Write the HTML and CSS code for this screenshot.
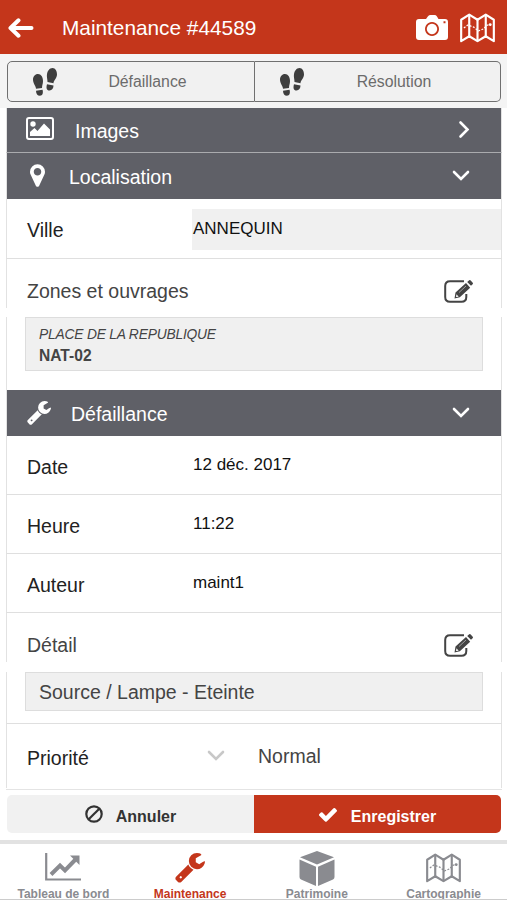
FILE: index.html
```html
<!DOCTYPE html>
<html lang="fr">

<head>
  <meta charset="utf-8">
  <title>Maintenance #44589</title>
  <link rel="stylesheet" href="styles.css">
</head>

<body>

  <!-- Shared icons -->
  <svg class="sprite">
    <symbol id="steps" viewBox="0 0 26 28">
      <path d="M6 6C9 6 11 9 11 13c0 3-1 4-1 7l-6 .8c0-3-3-5-3-9.300C1 8.500 3 6 6 6zM4 22.800l6.500-1c1 3 0 6-2.500 6s-4-2-4-5z" />
      <path d="M20.500 0c-3 0-5 3-5.500 6-.5 3 .5 5 .5 8l6 1.300c0-3 3.500-5 3.500-8.800C25 3 23.500 0 20.500 0zM15 16.200l6.500 1.400c0 3-1.500 4.900-4 4.900-3 0-3.500-3-2.500-6.300z" />
    </symbol>
    <symbol id="wrench" viewBox="64 128 1664 1664">
      <path d="M448 1472q0-26-19-45t-45-19-45 19-19 45 19 45 45 19 45-19 19-45zm644-420l-682 682q-37 37-90 37-52 0-91-37l-106-108q-38-36-38-90 0-53 38-91l681-681q39 98 114.500 173.500t173.500 114.500zm634-435q0 39-23 106-47 134-164.500 217.500t-258.500 83.500q-185 0-316.500-131.500t-131.500-316.500 131.500-316.500 316.500-131.500q58 0 121.500 16.500t107.500 46.500q16 11 16 28t-16 28l-293 169v224l193 107q5-3 79-48.500t135.500-81 70.500-35.500q15 0 23.500 10t8.500 25z" />
    </symbol>
    <symbol id="map" viewBox="0 0 36 30">
      <g fill="none" stroke="currentColor" stroke-width="2.200" stroke-linejoin="round">
        <path d="M1.200 6.500L9.500 1.200 18 6.500l8.500-5.300 8.300 5.300v22l-8.300-5-8.500 5-8.500-5-8.300 5z" />
        <path d="M9.500 1.200v22.300M18 6.500v22M26.500 1.200v22.300" />
        <path d="M4 15l4-3 6 2 5 4 5-2 4-4h4" stroke-width="1.300" stroke-dasharray="2 1.500" />
      </g>
      <circle cx="31" cy="11.500" r="1.500" />
    </symbol>
    <symbol id="edit" viewBox="0 0 29 23">
      <path d="M20 1.200H6Q1.200 1.200 1.200 6v11q0 4.800 4.800 4.800h11.500q4.800 0 4.800-4.800v-3" fill="none" stroke="currentColor" stroke-width="2" />
      <path d="M10.500 18.500l1-6L22 3l4.200 4.700-10.400 9.500zM23.200 2l2-1.700q.8-.6 1.500.1l2 2.400q.6.800-.1 1.500l-1.600 1.500z" />
      <path d="M12.500 14.200l2.200 2.500-2.700.3z" fill="#fff" />
      <path d="M15 12.500l7-6.500" fill="none" stroke="#aaa" stroke-width=".9" />
    </symbol>
    <symbol id="chevron" viewBox="0 0 18 11">
      <path d="M2 2l7 7 7-7" fill="none" stroke="currentColor" stroke-width="2.600" stroke-linecap="round" />
    </symbol>
  </svg>

  <header class="topbar">
    <svg class="back" viewBox="0 0 26 20">
      <path d="M10.500 2.300L2.500 10l8 7.700M3 10h20.500" fill="none" stroke="currentColor" stroke-width="4" stroke-linecap="round" stroke-linejoin="round" />
    </svg>
    <h1>Maintenance #44589</h1>
    <svg class="camera" viewBox="0 0 32 26">
      <path fill-rule="evenodd" d="M3 4h7l2-2.800Q13 0 14.500 0h4q1.500 0 2.300 1.200L22.500 4H29q3 0 3 3v15q0 3-3 3H3q-3 0-3-3V7q0-3 3-3zm13 3a7 7 0 1 0 .01 0zm0 1.800a5.200 5.200 0 1 1-.01 0zM27.500 6.200v2h2v-2z" />
    </svg>
    <svg class="map"><use href="#map" /></svg>
  </header>

  <nav class="tabs">
    <a class="tab"><svg><use href="#steps" /></svg><span>Défaillance</span></a>
    <a class="tab"><svg><use href="#steps" /></svg><span>Résolution</span></a>
  </nav>

  <main class="panel">
    <h2 class="bar bar-images">
      <svg class="icon-image" viewBox="0 0 28 23">
        <rect x="1" y="1" width="26" height="21" rx="2" fill="none" stroke="currentColor" stroke-width="2" />
        <circle cx="7" cy="7" r="2.700" />
        <path d="M4 19v-4l4.500-4 3 3L18 6.500l6 6V19z" />
      </svg>
      <span>Images</span>
      <svg class="chevron right"><use href="#chevron" /></svg>
    </h2>

    <h2 class="bar bar-place">
      <svg class="icon-marker" viewBox="384 128 1024 1536">
        <path d="M1152 640q0-106-75-181t-181-75-181 75-75 181 75 181 181 75 181-75 75-181zm256 0q0 109-33 179l-364 774q-16 33-47.500 52t-67.500 19-67.500-19-46.500-52l-365-774q-33-70-33-179 0-212 150-362t362-150 362 150 150 362z" />
      </svg>
      <span>Localisation</span>
      <svg class="chevron"><use href="#chevron" /></svg>
    </h2>
    <div class="row city">
      <label>Ville</label>
      <div class="value filled">ANNEQUIN</div>
    </div>
    <div class="title">
      <span>Zones et ouvrages</span>
      <svg class="edit"><use href="#edit" /></svg>
    </div>
    <div class="detail zones">
      <div class="box">
        <em>PLACE DE LA REPUBLIQUE</em>
        <strong>NAT-02</strong>
      </div>
    </div>

    <h2 class="bar bar-fault">
      <svg class="icon-wrench"><use href="#wrench" /></svg>
      <span>Défaillance</span>
      <svg class="chevron"><use href="#chevron" /></svg>
    </h2>
    <div class="row">
      <label>Date</label>
      <div class="value">12 déc. 2017</div>
    </div>
    <div class="row">
      <label>Heure</label>
      <div class="value">11:22</div>
    </div>
    <div class="row">
      <label>Auteur</label>
      <div class="value">maint1</div>
    </div>
    <div class="title">
      <span>Détail</span>
      <svg class="edit"><use href="#edit" /></svg>
    </div>
    <div class="detail source">
      <div class="box">Source / Lampe - Eteinte</div>
    </div>
    <div class="row priority">
      <label>Priorité</label>
      <svg class="chevron"><use href="#chevron" /></svg>
      <span>Normal</span>
    </div>
  </main>

  <div class="actions">
    <button type="button" class="cancel">
      <svg viewBox="0 0 18 18">
        <circle cx="9" cy="9" r="7.700" fill="none" stroke="currentColor" stroke-width="2.200" />
        <path d="M3.700 14.300L14.300 3.700" stroke="currentColor" stroke-width="2.200" />
      </svg>
      <span>Annuler</span>
    </button>
    <button type="button" class="save">
      <svg viewBox="121 266 1550 1256">
        <path d="M1671 566q0 40-28 68l-724 724-136 136q-28 28-68 28t-68-28l-136-136-362-362q-28-28-28-68t28-68l136-136q28-28 68-28t68 28l294 295 656-657q28-28 68-28t68 28l136 136q28 28 28 68z" />
      </svg>
      <span>Enregistrer</span>
    </button>
  </div>

  <nav class="bottom">
    <a>
      <svg class="chart" viewBox="0 0 36 28">
        <path d="M1.200 0v26.500H36" fill="none" stroke="currentColor" stroke-width="2.200" />
        <path d="M6 21.500l9-9 5 5L30.500 6.500" fill="none" stroke="currentColor" stroke-width="4" />
        <path d="M25 2.500h9.500V12z" />
      </svg>
      <span>Tableau de bord</span>
    </a>
    <a class="active">
      <svg class="tool"><use href="#wrench" /></svg>
      <span>Maintenance</span>
    </a>
    <a>
      <svg class="cube" viewBox="0 0 36 35">
        <path d="M18 0l17 6.200L18 13.500 1 6.200zM.5 8.500L17 15.800V35L2 28.500Q.5 27.800.5 26zM35.500 8.500L19 15.800V35l15-6.500q1.500-.7 1.500-2.500z" />
      </svg>
      <span>Patrimoine</span>
    </a>
    <a>
      <svg class="carto"><use href="#map" /></svg>
      <span>Cartographie</span>
    </a>
  </nav>

</body>

</html>
```
FILE: styles.css
```css
* {
  box-sizing: border-box;
}

body {
  margin: 0;
  height: 900px;
  overflow: hidden;
  background: #fff;
  color: #222;
  font-family: "Liberation Sans", Arial, sans-serif;
  font-size: 19.5px;
}

svg {
  display: block;
  flex: none;
  fill: currentColor;
}

.sprite {
  display: none;
}

/* Header */
.topbar {
  display: flex;
  align-items: center;
  height: 54px;
  padding: 2px 12px 0 8px;
  background: #c4361b;
  color: #fff;
}

.topbar h1 {
  flex: 1;
  margin: 0 0 0 28px;
  font-size: 20.8px;
  font-weight: normal;
}

.back {
  width: 26px;
  height: 20px;
}

.camera {
  width: 32px;
  height: 26px;
  margin-right: 12px;
}

.topbar .map {
  width: 35px;
  height: 30px;
}

.tabs {
  display: flex;
  height: 54px;
  padding: 7px 6px 6px 7px;
  background: #f4f4f4;
}

.tab {
  display: flex;
  align-items: center;
  width: 248px;
  height: 41px;
  border: 1px solid #707070;
  border-radius: 5px 0 0 5px;
  background: #f1f1f1;
  color: #6b6b6b;
  font-size: 15.8px;
}

.tab + .tab {
  width: 246px;
  border-left: 0;
  border-radius: 0 5px 5px 0;
}

.tab svg {
  width: 26px;
  height: 28px;
  margin-left: 24px;
  color: #3e3e3e;
}

.tab span {
  flex: 1;
  padding-left: 17px;
  padding-right: 34px;
  text-align: center;
}

/* Form */
.panel {
  height: 682px;
  margin: 0 5px 0 6px;
  border-bottom: 1px solid #e4e4e4;
}

.bar,
.row,
.title,
.detail {
  margin: 0;
  border: solid #e2e2e2;
  border-width: 0 1px;
}

.bar {
  display: flex;
  align-items: center;
  height: 46px;
  padding-right: 31px;
  background: #5f6067;
  background-clip: padding-box;
  color: #fff;
  font-size: 19.5px;
  font-weight: normal;
}

.bar span {
  flex: 1;
  padding-top: 3px;
}

.bar-images {
  height: 45px;
  padding-right: 28px;
  border-bottom: 1px solid #aaabae;
}

.icon-image {
  width: 28px;
  height: 23px;
  margin: 0 21px 4px 19px;
}

.icon-marker {
  width: 15px;
  height: 23px;
  margin: 0 24px 2px 23px;
}

.icon-wrench {
  width: 24px;
  height: 24px;
  margin: 0 20px 1px;
}

.chevron {
  width: 18px;
  height: 11px;
  margin-bottom: 2px;
}

.chevron.right {
  transform: rotate(-90deg);
}

.row {
  display: flex;
  align-items: center;
  height: 59px;
  padding-left: 20px;
  border-bottom: 1px solid #dfdfdf;
}

.row label {
  width: 165px;
  padding-top: 4px;
}

.city {
  height: 60px;
}

.value {
  flex: 1;
  height: 41px;
  margin-top: 1px;
  padding-left: 1px;
  line-height: 40px;
  color: #111;
  font-size: 17px;
}

.filled {
  background: #f0f0f0;
}

.title {
  display: flex;
  align-items: center;
  justify-content: space-between;
  height: 49px;
  padding: 16px 28px 0 20px;
  color: #444;
}

.edit {
  width: 29px;
  height: 23px;
}

.detail {
  margin-top: 9px;
  padding: 0 18px;
}

.box {
  padding: 0 13px;
  border: 1px solid #ddd;
  background: #f0f0f0;
  color: #444;
}

.zones {
  height: 73px;
}

.zones .box {
  height: 54px;
  padding-top: 6px;
  line-height: 21px;
}

.box em,
.box strong {
  display: block;
}

.box em {
  font-size: 13.8px;
  letter-spacing: -0.2px;
}

.box strong {
  font-size: 15.6px;
}

.source {
  height: 52px;
  margin-top: 10px;
  border-bottom: 1px solid #dfdfdf;
}

.source .box {
  height: 39px;
  line-height: 38px;
}

.priority {
  height: 64px;
  border-bottom: 0;
}

.priority label {
  width: 180px;
}

.priority .chevron {
  color: #c8c8c8;
}

.priority span {
  margin-left: 33px;
  padding-top: 1px;
  color: #444;
}

/* Buttons */
.actions {
  display: flex;
  height: 54px;
  padding: 5px 6px 11px 7px;
  border-bottom: 4px solid #e2e2e2;
}

.actions button {
  display: flex;
  align-items: center;
  justify-content: center;
  width: 247px;
  height: 38px;
  border: 0;
  padding: 0;
  font: bold 16px "Liberation Sans", Arial, sans-serif;
}

.actions span {
  padding-top: 5px;
}

.cancel {
  border-radius: 5px 0 0 5px;
  background: #f1f1f1;
  color: #333;
}

.cancel svg {
  width: 18px;
  height: 18px;
  margin-right: 13px;
}

.save {
  border-radius: 0 5px 5px 0;
  background: #c4361b;
  color: #fff;
}

.save svg {
  width: 18px;
  height: 15px;
  margin-right: 14px;
}

/* Bottom navigation */
.bottom {
  display: flex;
  height: 56px;
  overflow: hidden;
  border-bottom: 1px solid #ccc;
  color: #8a8b90;
  font-size: 12px;
  font-weight: bold;
}

.bottom a {
  display: flex;
  flex-direction: column;
  align-items: center;
  justify-content: space-between;
  width: 25%;
  height: 57px;
  padding-top: 9px;
}

.bottom .active {
  color: #c4361b;
}

.bottom svg {
  height: 30px;
}

.bottom .chart {
  width: 36px;
  height: 28px;
}

.bottom .tool {
  width: 30px;
}

.bottom .cube {
  width: 36px;
  height: 35px;
  margin-top: -2px;
}

.bottom .carto {
  width: 35px;
}
```
